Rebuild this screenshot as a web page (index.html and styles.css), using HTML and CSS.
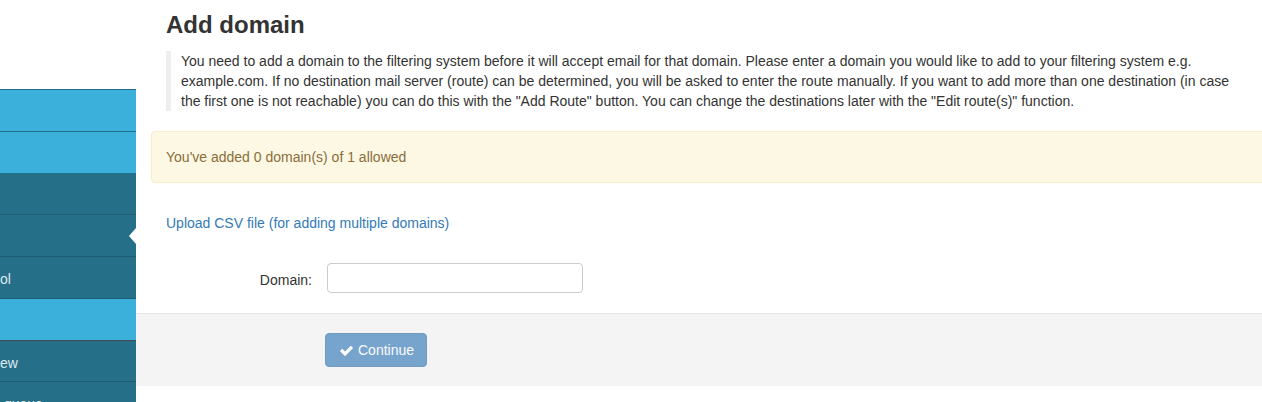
FILE: index.html
```html
<!DOCTYPE html>
<html>
<head>
  <title>Add domain</title>
  <link rel="stylesheet" href="styles.css">
</head>
<body>

<div class="sidebar">
  <ul class="nav">
    <li class="nav-item light"></li>
    <li class="nav-item light"></li>
    <li class="nav-item short"></li>
    <li class="nav-item active"></li>
    <li class="nav-item"><span>ol</span></li>
    <li class="nav-item light last-light"></li>
    <li class="nav-item short"><span>ew</span></li>
    <li class="nav-item"><span>&nbsp;queue</span></li>
  </ul>
</div>

<div class="main">
  <div class="content">
    <h3 class="title">Add domain</h3>
    <blockquote class="intro">
      You need to add a domain to the filtering system before it will accept email for that domain. Please enter a domain you would like to add to your filtering system e.g. example.com. If no destination mail server (route) can be determined, you will be asked to enter the route manually. If you want to add more than one destination (in case the first one is not reachable) you can do this with the "Add Route" button. You can change the destinations later with the "Edit route(s)" function.
    </blockquote>

    <div class="alert">You've added 0 domain(s) of 1 allowed</div>

    <a class="upload-link" href="#">Upload CSV file (for adding multiple domains)</a>

    <form class="domain-form">
      <div class="form-row">
        <label for="domain">Domain:</label>
        <input type="text" id="domain">
      </div>
    </form>
  </div>

  <div class="form-footer">
    <button type="button" class="btn-continue" disabled>
      <svg class="check" viewBox="0 0 16 16" width="15" height="15"><path d="M1 8.6 L3.5 6.1 L6.4 9 L12.6 2.8 L15.1 5.3 L6.4 14 Z" fill="#fff"/></svg>
      Continue
    </button>
  </div>
</div>

</body>
</html>
```

FILE: styles.css
```css
body {
  font-family: "Liberation Sans", Arial, sans-serif;
  font-size: 14px;
  line-height: 20px;
  color: #333;
  background-color: #fff;
  margin: 0;
  padding: 0;
  display: flex;
  width: 1262px;
  height: 402px;
  overflow: hidden;
}

.sidebar {
  width: 136px;
  flex: 0 0 136px;
  padding-top: 89px;
  overflow: hidden;
}

.nav {
  list-style: none;
  margin: 0;
  padding: 0;
  border-top: 1px solid #1f6a84;
}

.nav-item {
  position: relative;
  height: 41px;
  line-height: 41px;
  background-color: #266f88;
  border-bottom: 1px solid #1f5c71;
  color: #dfe9ee;
}

.nav-item.short {
  height: 40px;
  line-height: 40px;
}

.nav-item.light {
  background-color: #3bb0da;
  border-bottom-color: #23718d;
}

.nav-item.last-light {
  border-bottom-color: #444d52;
}

.nav-item span {
  display: block;
  padding-top: 2px;
}

.nav-item.active::after {
  content: "";
  position: absolute;
  right: 0;
  top: 13px;
  border-top: 8px solid transparent;
  border-bottom: 8px solid transparent;
  border-right: 7px solid #fff;
}

.main {
  flex: 0 0 1180px;
  width: 1180px;
}

.content {
  padding: 0 15px;
}

.title {
  font-size: 24px;
  font-weight: bold;
  line-height: 26px;
  margin: 12px 0 13px 15px;
  color: #333;
}

.intro {
  margin: 0 0 20px 15px;
  padding: 0 10px 0 10px;
  border-left: 5px solid #eee;
  width: 1060px;
  font-size: 14px;
  line-height: 20px;
}

.alert {
  background-color: #fcf8e3;
  border: 1px solid #faebcc;
  border-radius: 4px;
  color: #8a6d3b;
  padding: 15px 14px;
}

.upload-link {
  display: block;
  color: #337ab7;
  text-decoration: none;
  margin: 30px 0 0 15px;
}

.domain-form {
  margin: 30px 0 0 0;
  padding-bottom: 20px;
}

.form-row {
  display: flex;
  align-items: center;
}

.form-row label {
  width: 161px;
  text-align: right;
  padding-right: 15px;
  padding-top: 3px;
}

.form-row input {
  width: 256px;
  height: 30px;
  box-sizing: border-box;
  border: 1px solid #ccc;
  border-radius: 4px;
  padding: 5px 10px;
  font-size: 14px;
}

.form-footer {
  background-color: #f4f4f4;
  border-top: 1px solid #e5e5e5;
  padding: 19px 0 19px 189px;
}

.btn-continue {
  display: flex;
  align-items: center;
  gap: 4px;
  height: 34px;
  padding: 6px 12px 6px 13px;
  border: 1px solid #2e6da4;
  border-radius: 4px;
  background-color: #337ab7;
  color: #fff;
  font-family: "Liberation Sans", Arial, sans-serif;
  font-size: 14px;
  opacity: 0.65;
}
```
